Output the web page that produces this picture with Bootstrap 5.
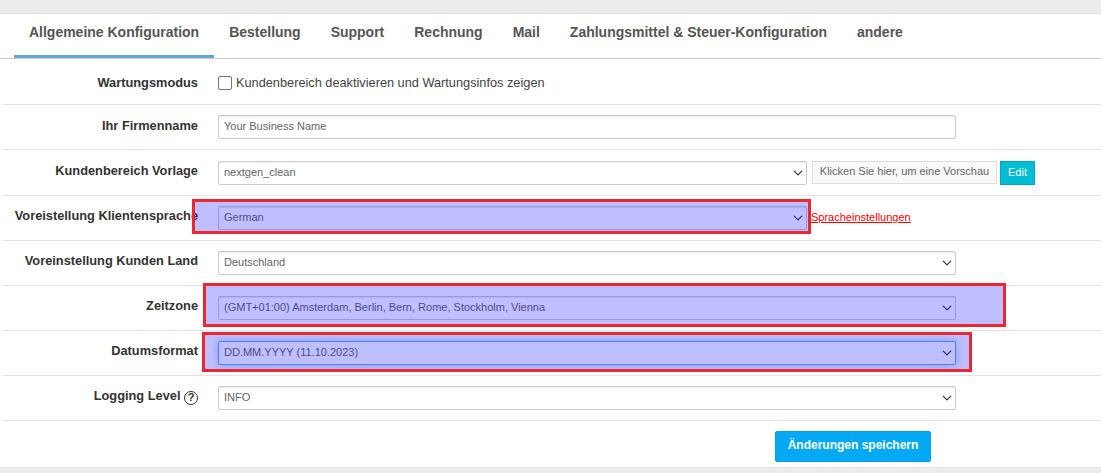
<!DOCTYPE html>
<html lang="de">
<head>
<meta charset="utf-8">
<title>Allgemeine Konfiguration</title>
<link href="https://cdn.jsdelivr.net/npm/bootstrap@5.3.0/dist/css/bootstrap.min.css" rel="stylesheet">
<style>
html,body{height:100%;}
body{background:#ececec;font-family:"Liberation Sans",Arial,sans-serif;color:#333;position:relative;overflow:hidden;}
.sheet{margin-top:13px;background:#fff;border-top:1px solid #ddd;border-bottom:1px solid #e2e2e2;height:455px;}
.tabbar{height:45px;border-bottom:1px solid #ccc;padding-left:14px;flex-wrap:nowrap;}
.tabbar .nav-link{height:44px;padding:10px 15px 0;font-size:13.99px;font-weight:700;color:#555;line-height:17px;white-space:nowrap;}
.tabbar .nav-link.active{border-bottom:3px solid #5ea9d9;color:#555;}
.formrow{margin-left:3px;height:45px;border-bottom:1px solid #e3e3e3;padding:10px 0 10px;}
.formrow.first{height:46px;}
.formrow.third{height:46px;padding-top:11px;}
.lbl{width:195px;flex:none;text-align:right;font-size:12.8px;font-weight:700;color:#333;line-height:16px;padding-top:2px;margin-right:20px;white-space:nowrap;}
.first .lbl{padding-top:6px;}
.second .lbl{padding-top:3px;}
.ctl{width:738px;flex:none;}
.ctl.short{width:589px;}
.first .ctl{padding-top:3px;}
.fld.form-control,.fld.form-select{height:24px;min-height:24px;font-size:11px;line-height:14px;padding:3px 20px 5px 5px;border:1px solid #ccc;border-radius:2px;color:#666;box-shadow:inset 0 1px 1px rgba(0,0,0,.075);}
.fld.form-select{background-position:right 1px center;background-size:14px 10px;}
.fld.focused{border-color:#66afe9;box-shadow:0 0 8px rgba(102,175,233,.6);}
.chk.form-check-input{width:14px;height:14px;margin:0 4px 0 0;border:1.5px solid #767676;border-radius:2px;flex:none;}
.chklabel{font-size:12.75px;line-height:16px;color:#444;}
.preview{height:23px;width:185px;margin-left:5px;background:#f9f9f9;border:1px solid #ddd;font-size:11px;color:#666;line-height:19px;text-align:center;white-space:nowrap;overflow:hidden;}
.editbtn.btn{height:24px;width:35px;margin-left:3px;padding:0 0 2px;font-size:11px;line-height:20px;background:#00bcd4;border:1px solid #00a5bb;border-radius:0;color:#fff;}
.langlink{font-size:11px;color:#f00;margin-left:4px;line-height:22px;white-space:nowrap;}
.qmark{display:inline-block;width:14px;height:14px;border:1.5px solid #333;border-radius:50%;font-size:11px;line-height:11px;text-align:center;vertical-align:-1px;font-weight:700;}
.savebar{padding-left:775px;padding-top:10px;}
.savebtn.btn{width:156px;height:31px;padding:0 0 2px;background:#03a9f4;border:1px solid #0a9ee0;border-radius:2px;color:#fff;font-size:12px;font-weight:700;line-height:27px;}
.mark-box{position:absolute;background:rgba(0,0,255,.25);border:3px solid #ee2632;pointer-events:none;}
.mb1{left:192px;top:199px;width:619px;height:35px;}
.mb2{left:203px;top:283px;width:803px;height:44px;}
.mb3{left:202px;top:332px;width:770px;height:40px;}
</style>
</head>
<body>
<div class="sheet">
  <ul class="nav tabbar">
    <li class="nav-item"><a class="nav-link active" href="#">Allgemeine Konfiguration</a></li>
    <li class="nav-item"><a class="nav-link" href="#">Bestellung</a></li>
    <li class="nav-item"><a class="nav-link" href="#">Support</a></li>
    <li class="nav-item"><a class="nav-link" href="#">Rechnung</a></li>
    <li class="nav-item"><a class="nav-link" href="#">Mail</a></li>
    <li class="nav-item"><a class="nav-link" href="#">Zahlungsmittel &amp; Steuer-Konfiguration</a></li>
    <li class="nav-item"><a class="nav-link" href="#">andere</a></li>
  </ul>
  <div class="formrow first d-flex">
    <div class="lbl">Wartungsmodus</div>
    <div class="ctl d-flex align-items-center">
      <input class="form-check-input chk" type="checkbox" id="wm">
      <label class="chklabel" for="wm">Kundenbereich deaktivieren und Wartungsinfos zeigen</label>
    </div>
  </div>
  <div class="formrow second d-flex">
    <div class="lbl">Ihr Firmenname</div>
    <div class="ctl"><input class="form-control fld" type="text" value="Your Business Name"></div>
  </div>
  <div class="formrow third d-flex">
    <div class="lbl">Kundenbereich Vorlage</div>
    <div class="ctl short"><select class="form-select fld"><option>nextgen_clean</option></select></div>
    <div class="preview">Klicken Sie hier, um eine Vorschau</div>
    <button class="btn editbtn" type="button">Edit</button>
  </div>
  <div class="formrow d-flex">
    <div class="lbl">Voreistellung Klientensprache</div>
    <div class="ctl short"><select class="form-select fld"><option>German</option></select></div>
    <a class="langlink" href="#">Spracheinstellungen</a>
  </div>
  <div class="formrow d-flex">
    <div class="lbl">Voreinstellung Kunden Land</div>
    <div class="ctl"><select class="form-select fld"><option>Deutschland</option></select></div>
  </div>
  <div class="formrow d-flex">
    <div class="lbl">Zeitzone</div>
    <div class="ctl"><select class="form-select fld"><option>(GMT+01:00) Amsterdam, Berlin, Bern, Rome, Stockholm, Vienna</option></select></div>
  </div>
  <div class="formrow d-flex">
    <div class="lbl">Datumsformat</div>
    <div class="ctl"><select class="form-select fld focused"><option>DD.MM.YYYY (11.10.2023)</option></select></div>
  </div>
  <div class="formrow d-flex">
    <div class="lbl">Logging Level <span class="qmark">?</span></div>
    <div class="ctl"><select class="form-select fld"><option>INFO</option></select></div>
  </div>
  <div class="savebar"><button class="btn savebtn" type="button">Änderungen speichern</button></div>
</div>
<div class="mark-box mb1"></div>
<div class="mark-box mb2"></div>
<div class="mark-box mb3"></div>
<script src="https://cdn.jsdelivr.net/npm/bootstrap@5.3.0/dist/js/bootstrap.bundle.min.js"></script>
</body>
</html>
